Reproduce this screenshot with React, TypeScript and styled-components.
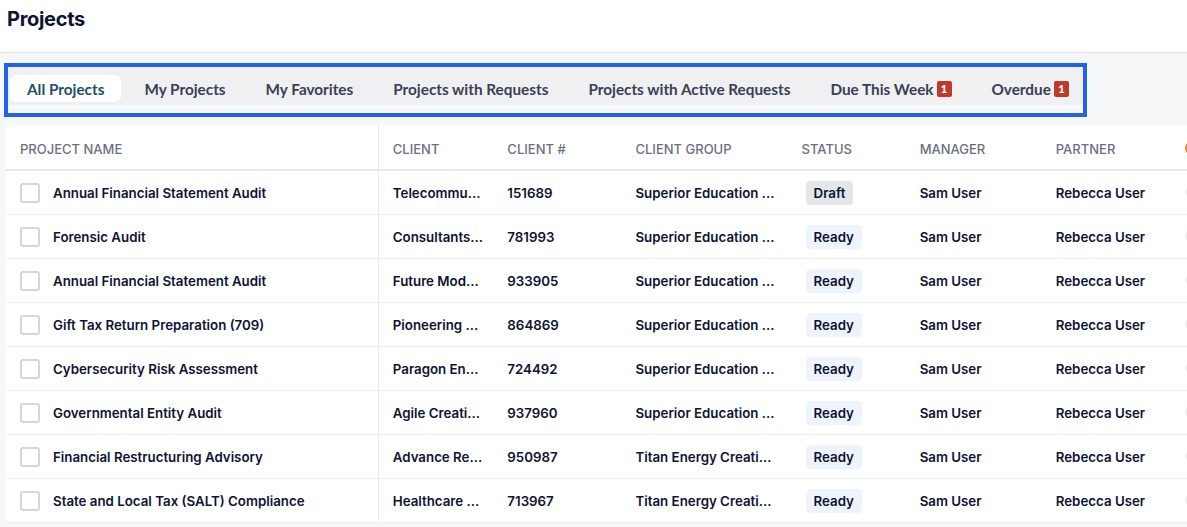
import React from 'react';
import styled, { createGlobalStyle } from 'styled-components';

const GlobalStyle = createGlobalStyle`
    body {
        margin: 0;
        background: #f6f7f9;
        font-family: Inter, "Noto Sans", sans-serif;
        overflow: hidden;
    }
`;

const Page = styled.div`
    width: 1187px;
    height: 527px;
    overflow: hidden;
`;

const Header = styled.header`
    height: 53px;
    box-sizing: border-box;
    background: #ffffff;
    border-bottom: 1px solid #e3e5e9;
    padding: 7px 7px 0;
`;

const Title = styled.h1`
    margin: 0;
    font-family: Inter, sans-serif;
    font-size: 20px;
    font-weight: 700;
    letter-spacing: -0.3px;
    color: #0d1333;
`;

const TabFrame = styled.div`
    display: inline-block;
    margin: 10px 0 0 4px;
    border: 4px solid #2262e6;
    padding-bottom: 8px;
`;

const TabStrip = styled.nav`
    display: flex;
    gap: 6px;
    padding: 8px 0 3px 2px;
    background: #f0f0f3;
`;

const Tab = styled.div<{ $active?: boolean }>`
    display: flex;
    align-items: center;
    gap: 3px;
    height: 27px;
    padding: 0 17px;
    border-radius: 6px;
    background: ${(p) => (p.$active ? '#ffffff' : 'transparent')};
    color: ${(p) => (p.$active ? '#1e5066' : '#384056')};
    font-family: Lato, sans-serif;
    font-size: 15.3px;
    font-weight: 700;
    white-space: nowrap;

    &:last-child {
        padding-right: 14px;
    }
`;

const Count = styled.span`
    display: inline-flex;
    align-items: center;
    justify-content: center;
    width: 15px;
    height: 16px;
    border-radius: 2px;
    background: #c0392b;
    color: #ffffff;
    font-size: 11px;
    font-weight: 900;
`;

const TableWrap = styled.div`
    margin: 8px 0 0 6px;
    background: #ffffff;
    overflow: hidden;
`;

const Table = styled.table`
    border-collapse: collapse;
    table-layout: fixed;
    width: 1300px;
`;

const Th = styled.th<{ $sticky?: boolean }>`
    height: 45px;
    padding: 4px 14px 0;
    box-sizing: border-box;
    text-align: left;
    font-size: 13px;
    font-weight: 500;
    color: #6b7080;
    text-transform: uppercase;
    white-space: nowrap;
    border-bottom: 2px solid #e6e8ec;
    border-right: ${(p) => (p.$sticky ? '1px solid #e6e8ec' : 'none')};
`;

const Td = styled.td<{ $sticky?: boolean }>`
    height: 43px;
    padding: 0 14px;
    font-size: 13.3px;
    font-weight: 600;
    color: #0e1433;
    white-space: nowrap;
    overflow: hidden;
    border-bottom: 1px solid #eceef1;
    border-right: ${(p) => (p.$sticky ? '1px solid #e6e8ec' : 'none')};
`;

const NameCell = styled.div`
    display: flex;
    align-items: center;
    gap: 13px;
`;

const Checkbox = styled.span`
    width: 16px;
    height: 16px;
    border: 2px solid #d3d6dc;
    border-radius: 3px;
    flex-shrink: 0;
`;

const Status = styled.span<{ $draft?: boolean }>`
    display: inline-block;
    margin-left: 4px;
    padding: 3px 8px;
    border-radius: 4px;
    line-height: 18px;
    background: ${(p) => (p.$draft ? '#e4e6ea' : '#eef4fe')};
`;

const GhostPill = styled.span`
    display: inline-block;
    width: 40px;
    height: 12px;
    border-radius: 6px;
    background: #eeeff2;
`;

const OrangeMark = styled.span`
    display: inline-block;
    width: 10px;
    height: 10px;
    border: 2px solid #e8823a;
    border-radius: 50%;
`;

const tabs = [
    { label: 'All Projects', active: true },
    { label: 'My Projects' },
    { label: 'My Favorites' },
    { label: 'Projects with Requests' },
    { label: 'Projects with Active Requests' },
    { label: 'Due This Week', count: 1 },
    { label: 'Overdue', count: 1 },
];

const rows = [
    ['Annual Financial Statement Audit', 'Telecommu...', '151689', 'Superior Education ...', 'Draft'],
    ['Forensic Audit', 'Consultants...', '781993', 'Superior Education ...', 'Ready'],
    ['Annual Financial Statement Audit', 'Future Mod...', '933905', 'Superior Education ...', 'Ready'],
    ['Gift Tax Return Preparation (709)', 'Pioneering ...', '864869', 'Superior Education ...', 'Ready'],
    ['Cybersecurity Risk Assessment', 'Paragon En...', '724492', 'Superior Education ...', 'Ready'],
    ['Governmental Entity Audit', 'Agile Creati...', '937960', 'Superior Education ...', 'Ready'],
    ['Financial Restructuring Advisory', 'Advance Re...', '950987', 'Titan Energy Creati...', 'Ready'],
    ['State and Local Tax (SALT) Compliance', 'Healthcare ...', '713967', 'Titan Energy Creati...', 'Ready'],
];

const App = () => {
    return (
        <Page>
            <GlobalStyle />
            <Header>
                <Title>Projects</Title>
            </Header>
            <TabFrame>
                <TabStrip>
                    {tabs.map((t) => (
                        <Tab key={t.label} $active={t.active}>
                            {t.label}
                            {t.count ? <Count>{t.count}</Count> : null}
                        </Tab>
                    ))}
                </TabStrip>
            </TabFrame>
            <TableWrap>
                <Table>
                    <colgroup>
                        <col style={{ width: 372 }} />
                        <col style={{ width: 115 }} />
                        <col style={{ width: 128 }} />
                        <col style={{ width: 166 }} />
                        <col style={{ width: 118 }} />
                        <col style={{ width: 136 }} />
                        <col style={{ width: 129 }} />
                        <col style={{ width: 135 }} />
                    </colgroup>
                    <thead>
                        <tr>
                            <Th $sticky>Project Name</Th>
                            <Th>Client</Th>
                            <Th>Client #</Th>
                            <Th>Client Group</Th>
                            <Th>Status</Th>
                            <Th>Manager</Th>
                            <Th>Partner</Th>
                            <Th><OrangeMark /></Th>
                        </tr>
                    </thead>
                    <tbody>
                        {rows.map((r, i) => (
                            <tr key={i}>
                                <Td $sticky>
                                    <NameCell>
                                        <Checkbox />
                                        {r[0]}
                                    </NameCell>
                                </Td>
                                <Td>{r[1]}</Td>
                                <Td>{r[2]}</Td>
                                <Td>{r[3]}</Td>
                                <Td>
                                    <Status $draft={r[4] === 'Draft'}>{r[4]}</Status>
                                </Td>
                                <Td>Sam User</Td>
                                <Td>Rebecca User</Td>
                                <Td><GhostPill /></Td>
                            </tr>
                        ))}
                    </tbody>
                </Table>
            </TableWrap>
        </Page>
    );
};

export default App;
